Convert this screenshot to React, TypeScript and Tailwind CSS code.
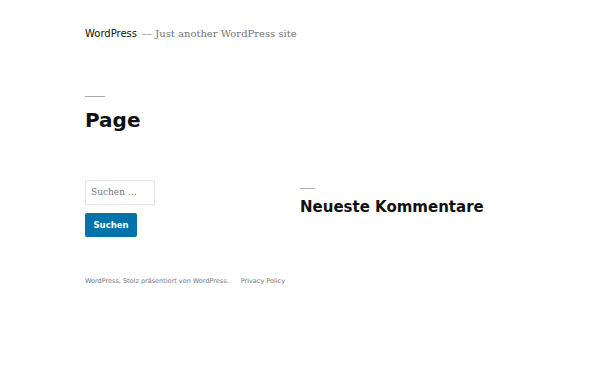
export default function App() {
  return (
    <div className="w-[600px] h-[375px] bg-white text-[#111] font-['DejaVu_Sans',sans-serif] overflow-hidden">
      {/* Site header */}
      <header className="pl-[85px] pt-[27px] flex items-baseline gap-[5px] text-[10px] leading-[14px]">
        <span className="text-[#111]">WordPress</span>
        <span className="text-[#767676] font-['DejaVu_Serif',serif]">— Just another WordPress site</span>
      </header>

      {/* Entry */}
      <main className="pl-[85px] pt-[55px]">
        <div className="w-[20px] h-px bg-[#aaa]" />
        <h1 className="mt-[11px] text-[20px] leading-[24px] font-bold">Page</h1>
      </main>

      {/* Widgets */}
      <section className="pl-[85px] pt-[48px] flex">
        <div className="w-[215px]">
          <div className="w-[70px] h-[25px] border border-[#e6e6e6] px-[5px] flex items-center text-[9px] text-[#767676] font-['DejaVu_Serif',serif]">
            Suchen …
          </div>
          <button className="mt-[8px] w-[52px] h-[24px] rounded-[2px] bg-[#0073aa] text-white text-[8.5px] font-bold">
            Suchen
          </button>
        </div>
        <div className="pt-[8px]">
          <div className="w-[15px] h-px bg-[#aaa]" />
          <h2 className="mt-[9px] text-[15px] leading-[18px] font-bold">Neueste Kommentare</h2>
        </div>
      </section>

      {/* Footer */}
      <footer className="pl-[85px] pt-[40px] flex gap-[12px] text-[6.5px] text-[#767676]">
        <span>WordPress, Stolz präsentiert von WordPress.</span>
        <span>Privacy Policy</span>
      </footer>
    </div>
  )
}
